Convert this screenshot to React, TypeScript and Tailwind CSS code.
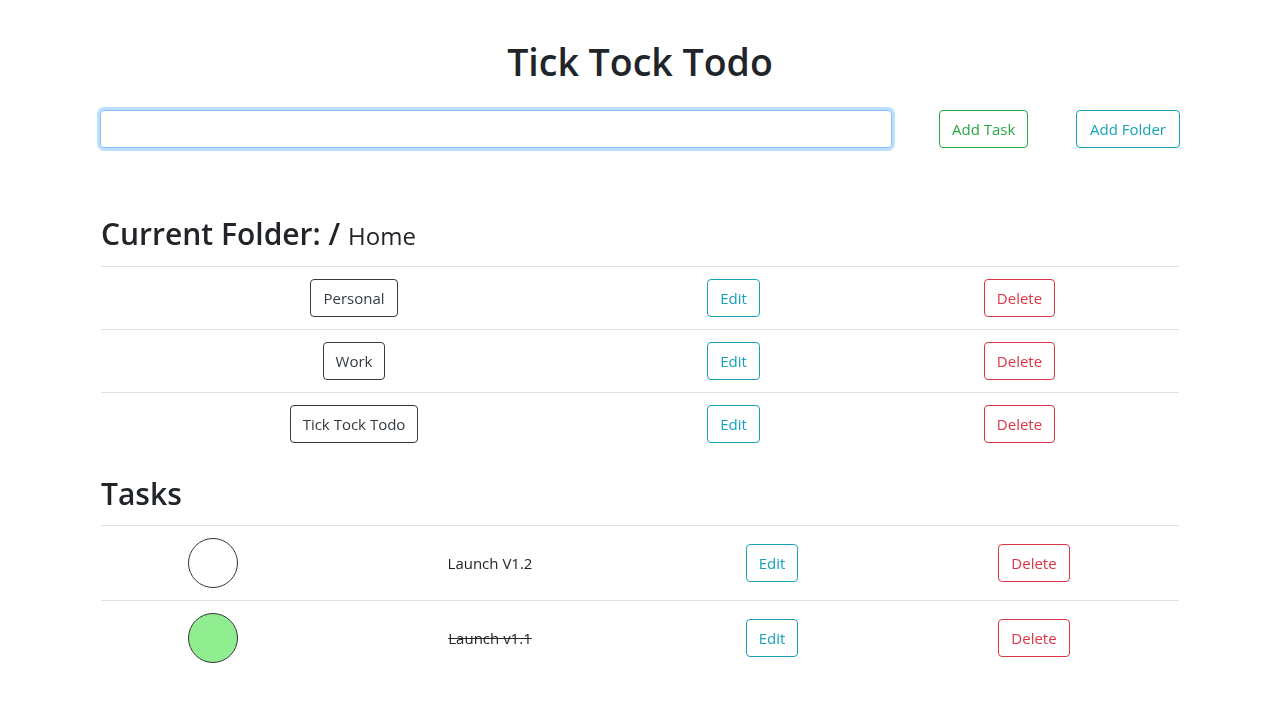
import React, { useState } from 'react'

type Task = { id: number; name: string; done: boolean }

const folders = ['Personal', 'Work', 'Tick Tock Todo']

const App: React.FC = () => {
    const [text, setText] = useState('')
    const [tasks, setTasks] = useState<Task[]>([
        { id: 1, name: 'Launch V1.2', done: false },
        { id: 2, name: 'Launch v1.1', done: true },
    ])

    const toggle = (id: number) => {
        setTasks(prev => prev.map(t => (t.id === id ? { ...t, done: !t.done } : t)))
    }

    const btn = 'h-[38px] px-3 rounded-[4px] border text-[15px] leading-none bg-white whitespace-nowrap'

    return (
        <div className="min-h-screen bg-white text-[#212529] font-['Open_Sans',sans-serif]">
            <div className="ml-[100px] w-[1080px] pt-[38px]">
                <h1 className="text-center text-[37.5px] leading-[48px] font-semibold">Tick Tock Todo</h1>

                <div className="mt-[24px] flex items-center">
                    <input
                        autoFocus
                        value={text}
                        onChange={e => setText(e.target.value)}
                        className="h-[38px] w-[792px] rounded-[4px] border border-[#80bdff] px-3 outline-none shadow-[0_0_0_3px_rgba(0,123,255,0.25)] text-[15px]"
                    />
                    <button className={`${btn} ml-[47px] w-[89px] border-[#28a745] text-[#28a745]`}>Add Task</button>
                    <button className={`${btn} ml-[48px] w-[104px] border-[#17a2b8] text-[#17a2b8]`}>Add Folder</button>
                </div>

                <h2 className="mt-[68px] ml-[1px] text-[30px] leading-[36px] font-semibold">
                    Current Folder: / <span className="text-[24px] font-normal">Home</span>
                </h2>

                <div className="mt-[12px] ml-[1px] w-[1078px]">
                    {folders.map(f => (
                        <div key={f} className="grid grid-cols-[506px_253px_319px] items-center h-[63px] border-t border-[#dee2e6]">
                            <div className="flex justify-center">
                                <button className={`${btn} border-[#343a40] text-[#343a40]`}>{f}</button>
                            </div>
                            <div className="flex justify-center">
                                <button className={`${btn} border-[#17a2b8] text-[#17a2b8]`}>Edit</button>
                            </div>
                            <div className="flex justify-center">
                                <button className={`${btn} border-[#dc3545] text-[#dc3545]`}>Delete</button>
                            </div>
                        </div>
                    ))}
                </div>

                <h2 className="mt-[21px] ml-[1px] text-[30px] leading-[36px] font-semibold">Tasks</h2>

                <div className="mt-[13px] ml-[1px] w-[1078px]">
                    {tasks.map(t => (
                        <div key={t.id} className="grid grid-cols-[224px_330px_234px_290px] items-center h-[75px] border-t border-[#dee2e6]">
                            <div className="flex justify-center">
                                <button
                                    onClick={() => toggle(t.id)}
                                    className={`w-[50px] h-[50px] rounded-full border border-[#333] ${t.done ? 'bg-[#90ee90]' : 'bg-white'}`}
                                />
                            </div>
                            <div className={`text-center text-[15px] ${t.done ? 'line-through' : ''}`}>{t.name}</div>
                            <div className="flex justify-center">
                                <button className={`${btn} border-[#17a2b8] text-[#17a2b8]`}>Edit</button>
                            </div>
                            <div className="flex justify-center">
                                <button className={`${btn} border-[#dc3545] text-[#dc3545]`}>Delete</button>
                            </div>
                        </div>
                    ))}
                </div>
            </div>
        </div>
    )
}

export default App
